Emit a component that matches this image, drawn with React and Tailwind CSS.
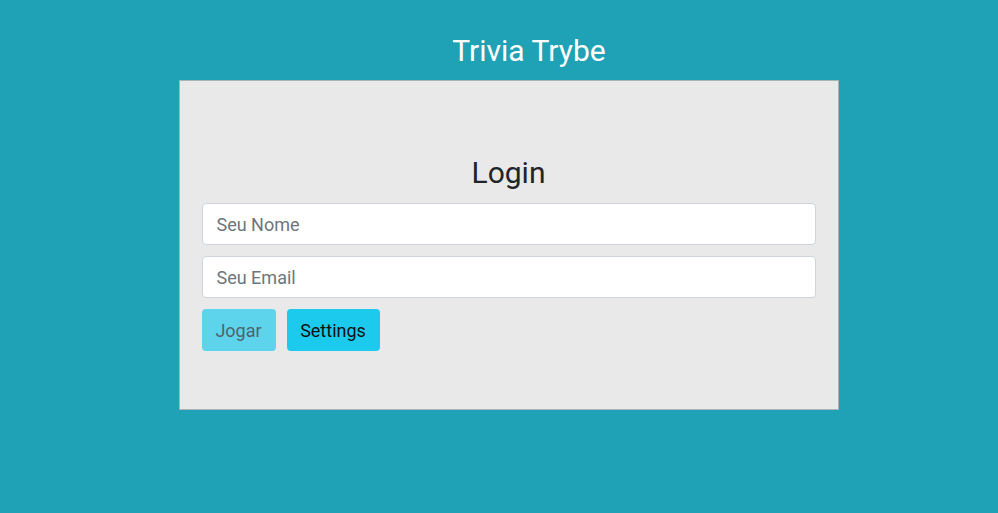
export default function App() {
  return (
    <div
      className="min-h-[513px] w-full bg-[#1fa2b6] flex flex-col items-center"
      style={{ fontFamily: "Roboto, 'Liberation Sans', sans-serif" }}
    >
      <header className="w-full h-[80px] flex items-center justify-center pl-[60px] pt-[22px]">
        <h1 className="text-[30px] leading-none text-white font-normal">Trivia Trybe</h1>
      </header>

      <div className="w-full flex justify-center pl-[19px]">
        <div className="w-[660px] h-[330px] bg-[#e9e9e9] border border-[#a9b4b6] px-[22px] pt-[74px]">
          <h2 className="text-[30px] leading-[36px] text-[#212529] text-center mb-[12px]">Login</h2>
          <form className="flex flex-col gap-[11px]">
            <input
              type="text"
              placeholder="Seu Nome"
              className="w-full h-[42px] bg-white border border-[#ced4da] rounded-[4px] px-[14px] text-[18px] text-[#495057] placeholder:text-[#6c757d] outline-none"
            />
            <input
              type="email"
              placeholder="Seu Email"
              className="w-full h-[42px] bg-white border border-[#ced4da] rounded-[4px] px-[14px] text-[18px] text-[#495057] placeholder:text-[#6c757d] outline-none"
            />
            <div className="flex gap-[11px]">
              <button
                type="button"
                disabled
                className="h-[42px] w-[74px] rounded-[4px] bg-[#5dd4ec] text-[18px] text-[#4f646c]"
              >
                Jogar
              </button>
              <button
                type="button"
                className="h-[42px] w-[93px] rounded-[4px] bg-[#1ccaee] text-[18px] text-[#111]"
              >
                Settings
              </button>
            </div>
          </form>
        </div>
      </div>
    </div>
  );
}
